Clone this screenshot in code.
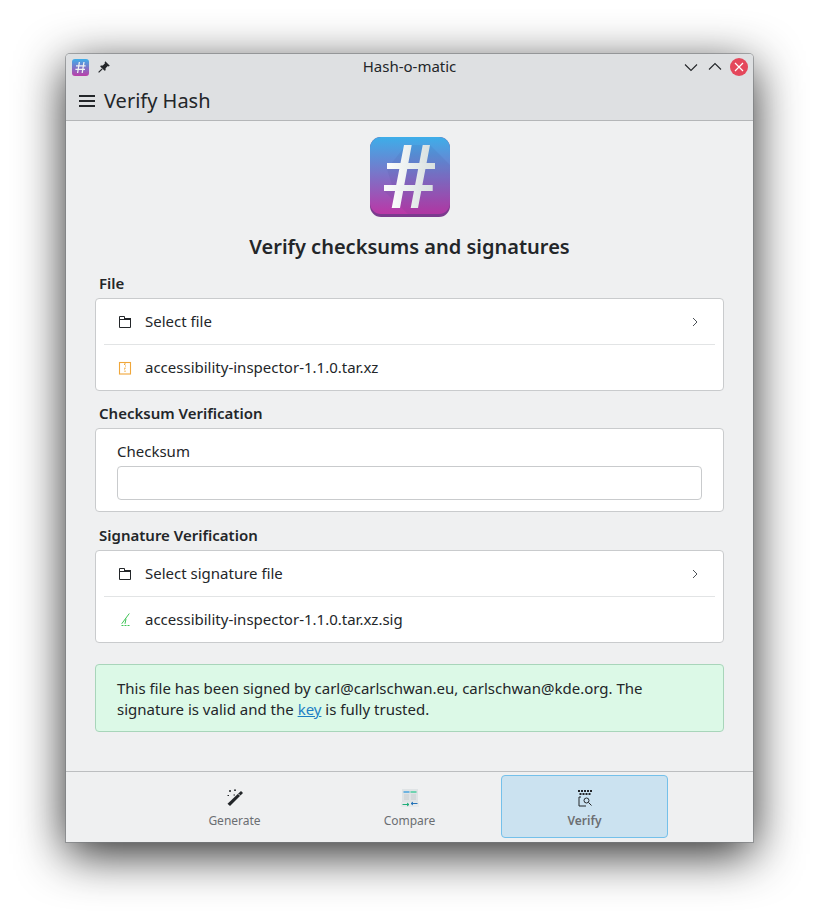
<div class="page">
  <div class="window">
    <div class="titlebar">
      <div class="tb-left">
        <svg viewBox="0 0 17 17" width="17" height="17">
          <defs>
            <linearGradient id="gs" x1="0" y1="0" x2="0" y2="1">
              <stop offset="0" stop-color="#3daee9" />
              <stop offset="1" stop-color="#bb3da8" />
            </linearGradient>
          </defs>
          <rect width="17" height="17" rx="3" fill="url(#gs)" />
          <path d="M7.4 3 L5.6 14 M12 3 L10.2 14 M4 6.8 H13.6 M3.4 10.4 H13" stroke="#eef2f2" stroke-width="1.3" fill="none" />
        </svg>
        <svg class="pin" viewBox="0 0 14 14" width="14" height="14">
          <path d="M8.3 1.2 L12.8 5.7 L11.6 6.4 L10.8 6 L8.6 8.2 L8.6 10.2 L7.6 10.8 L3.2 6.4 L3.8 5.4 L5.8 5.4 L8 3.2 L7.6 2.4 Z" fill="#232629" />
          <path d="M5.2 8.8 L1.6 12.4" stroke="#232629" stroke-width="1.2" />
        </svg>
      </div>
      <div class="tb-title">Hash-o-matic</div>
      <div class="tb-right">
        <svg class="down" viewBox="0 0 14 14" width="14" height="14"><path d="M1 4.5 L7 10.5 L13 4.5" fill="none" stroke="#232629" stroke-width="1.1" /></svg>
        <svg class="up" viewBox="0 0 14 14" width="14" height="14"><path d="M1 9.5 L7 3.5 L13 9.5" fill="none" stroke="#232629" stroke-width="1.1" /></svg>
        <svg viewBox="0 0 18 18" width="18" height="18">
          <circle cx="9" cy="9" r="9" fill="#e4475b" />
          <path d="M5 5 L13 13 M13 5 L5 13" stroke="#fff" stroke-width="1.2" fill="none" />
        </svg>
      </div>
    </div>

    <div class="header">
      <svg viewBox="0 0 16 12" width="16" height="12"><path d="M0 1 H16 M0 6 H16 M0 11 H16" stroke="#232629" stroke-width="2" fill="none" /></svg>
      <span class="page-title">Verify Hash</span>
    </div>

    <main class="content">
      <svg class="hero" viewBox="0 0 80 80" width="80" height="80">
        <defs>
          <linearGradient id="g" x1="0" y1="0" x2="0" y2="1">
            <stop offset="0" stop-color="#3daee9" />
            <stop offset="1" stop-color="#bb37a6" />
          </linearGradient>
          <linearGradient id="h" x1="0" y1="0" x2="1" y2="0">
            <stop offset="0" stop-color="#fbfcfc" />
            <stop offset="1" stop-color="#d8e0e0" />
          </linearGradient>
        </defs>
        <rect width="80" height="80" rx="11" fill="#7b3a8e" />
        <path d="M0 11 A11 11 0 0 1 11 0 H69 A11 11 0 0 1 80 11 V66 A11 11 0 0 1 69 77 H11 A11 11 0 0 1 0 66 Z" fill="url(#g)" />
        <path d="M60 8 L80 28 V66 A11 11 0 0 1 69 77 H38 L14 54 L22 48 L17 32 L36 8 Z" fill="#2c3170" opacity="0.07" />
        <path d="M34 8 H41.7 L30 71 H21.7 Z M52.7 8 H60 L48 71 H40.7 Z" fill="url(#h)" />
        <rect x="17" y="26" width="48" height="6" fill="url(#h)" />
        <rect x="14" y="48" width="48.7" height="6" fill="url(#h)" />
      </svg>

      <h1>Verify checksums and signatures</h1>

      <section class="group first">
        <h2>File</h2>
        <div class="card">
          <div class="row">
            <svg class="ri" viewBox="0 0 14 14" width="14" height="14">
              <path d="M1.5 1.5 H6.5 V3.5 H12.5 V12.5 H1.5 Z" fill="none" stroke="#232629" stroke-width="1" />
              <path d="M1 4 H13 V5 H1 Z M6 3 H13 V4 H6 Z" fill="#232629" />
            </svg>
            <span class="grow">Select file</span>
            <svg class="chev" viewBox="0 0 10 10" width="10" height="10"><path d="M3 1 L7 5 L3 9" fill="none" stroke="#4d5257" stroke-width="1" /></svg>
          </div>
          <div class="sep"></div>
          <div class="row">
            <svg class="ri" viewBox="0 0 14 14" width="14" height="14">
              <rect x="1.5" y="1.5" width="11" height="11.5" fill="none" stroke="#f0a73a" stroke-width="1.1" />
              <path d="M7 2 V3.5 M6 3.5 H7 M7 5 H8 M7 6.5 V8 M6 8 H7 M7 9.5 V11" stroke="#f0a73a" stroke-width="1" fill="none" />
            </svg>
            <span class="grow">accessibility-inspector-1.1.0.tar.xz</span>
          </div>
        </div>
      </section>

      <section class="group second">
        <h2>Checksum Verification</h2>
        <div class="card field">
          <label for="checksum">Checksum</label>
          <input id="checksum" type="text" />
        </div>
      </section>

      <section class="group">
        <h2>Signature Verification</h2>
        <div class="card">
          <div class="row">
            <svg class="ri" viewBox="0 0 14 14" width="14" height="14">
              <path d="M1.5 1.5 H6.5 V3.5 H12.5 V12.5 H1.5 Z" fill="none" stroke="#232629" stroke-width="1" />
              <path d="M1 4 H13 V5 H1 Z M6 3 H13 V4 H6 Z" fill="#232629" />
            </svg>
            <span class="grow">Select signature file</span>
            <svg class="chev" viewBox="0 0 10 10" width="10" height="10"><path d="M3 1 L7 5 L3 9" fill="none" stroke="#4d5257" stroke-width="1" /></svg>
          </div>
          <div class="sep"></div>
          <div class="row">
            <svg class="ri" viewBox="0 0 14 14" width="14" height="14">
              <path d="M11.3 0.5 L3.7 10.8 M8 5.8 L7 10.8" fill="none" stroke="#3fc456" stroke-width="1" />
              <path d="M3.5 12.5 H11.5" stroke="#3fc456" stroke-width="1" stroke-dasharray="2 1" />
            </svg>
            <span class="grow">accessibility-inspector-1.1.0.tar.xz.sig</span>
          </div>
        </div>
      </section>

      <div class="message">
        This file has been signed by carl@carlschwan.eu, carlschwan@kde.org. The signature is valid and the <a href="#key">key</a> is fully trusted.
      </div>
    </main>

    <footer class="footer">
      <div class="tab">
        <svg viewBox="0 0 18 18" width="18" height="18">
          <path d="M15 2 L17 4 L4 17 L1.5 14.8 Z" fill="#232629" />
          <path d="M12.3 4.8 L14.3 6.8" stroke="#eff0f1" stroke-width="1" />
          <path d="M4 1 V3 M3 2 H5 M9 0.5 V2 M8 1.2 H10 M1.5 6.5 H3 M7.5 6 H9" stroke="#232629" stroke-width="1" fill="none" />
        </svg>
        <span>Generate</span>
      </div>
      <div class="tab">
        <svg viewBox="0 0 18 18" width="18" height="18">
          <rect x="1" y="0" width="16" height="13" fill="#dfe3e5" />
          <rect x="2.5" y="2" width="6" height="2" fill="#6fb3e0" />
          <rect x="9.5" y="2" width="6" height="2" fill="#6fd3b0" />
          <path d="M3 6 H8 M10 6 H15 M3 8 H8 M10 8 H15 M3 10 H8 M10 10 H15" stroke="#c8cdd0" stroke-width="1" />
          <rect x="0" y="13" width="18" height="5" fill="#e6e9ea" />
          <path d="M1.5 15.5 H8 M6 14 L8 15.5 L6 17" stroke="#1fae7a" stroke-width="1" fill="none" />
          <path d="M16.5 14.5 H10 M12 13 L10 14.5 L12 16" stroke="#2573b8" stroke-width="1" fill="none" />
        </svg>
        <span>Compare</span>
      </div>
      <div class="tab active">
        <svg viewBox="0 0 18 18" width="18" height="18">
          <path d="M2 2 H17" stroke="#232629" stroke-width="2" stroke-dasharray="2 1" fill="none" />
          <path d="M3.5 5 H15.5" stroke="#232629" stroke-width="2" stroke-dasharray="2 1" fill="none" />
          <path d="M3 8 V17 H10 M3 8 H5" stroke="#232629" stroke-width="1" fill="none" />
          <circle cx="10.5" cy="11.5" r="2.5" fill="none" stroke="#232629" stroke-width="1" />
          <path d="M12.5 13.5 L15.5 16.5" stroke="#232629" stroke-width="1" />
        </svg>
        <span>Verify</span>
      </div>
    </footer>
  </div>
</div>

<style>
  :global(body) {
    margin: 0;
    background: #fff;
  }
  .page {
    width: 819px;
    height: 920px;
    box-sizing: border-box;
    padding: 54px 66px 78px;
    font-family: "Noto Sans", sans-serif;
    font-size: 15px;
    color: #232629;
    overflow: hidden;
  }
  .window {
    width: 687px;
    height: 788px;
    display: flex;
    flex-direction: column;
    border-radius: 4px 4px 0 0;
    box-shadow:
      0 0 0 1px rgba(120, 123, 126, 0.6),
      0 12px 48px rgba(0, 0, 0, 0.85);
    background: #eff0f1;
    overflow: hidden;
  }
  .titlebar {
    height: 26px;
    flex: none;
    background: #dee0e2;
    display: flex;
    align-items: center;
    justify-content: space-between;
    padding: 0 5px 0 6px;
    position: relative;
  }
  .tb-left {
    display: flex;
    align-items: center;
    gap: 8px;
  }
  .tb-title {
    position: absolute;
    left: 0;
    right: 0;
    top: 0;
    text-align: center;
    line-height: 24px;
  }
  .tb-right {
    display: flex;
    align-items: center;
  }
  .down {
    margin-right: 10px;
  }
  .up {
    margin-right: 8px;
  }
  .header {
    height: 41px;
    flex: none;
    box-sizing: border-box;
    background: #dee0e2;
    border-bottom: 1px solid #b4b6b8;
    display: flex;
    align-items: center;
    gap: 9px;
    padding: 1px 13px 0;
  }
  .page-title {
    font-size: 20px;
    line-height: 30px;
  }
  .content {
    flex: 1;
    display: flex;
    flex-direction: column;
    padding: 16px 29px 0;
  }
  .hero {
    align-self: center;
    flex: none;
  }
  h1 {
    margin: 15px 0 0;
    font-size: 20px;
    line-height: 30px;
    font-weight: 600;
    text-align: center;
  }
  .group {
    margin-top: 13px;
  }
  .group.first {
    margin-top: 11px;
  }
  .group.second {
    margin-top: 12px;
  }
  h2 {
    margin: 0 0 5px 4px;
    font-size: 15px;
    line-height: 20px;
    font-weight: 600;
  }
  .card {
    background: #fff;
    border: 1px solid #c9cbcd;
    border-radius: 4px;
    box-sizing: border-box;
  }
  .row {
    height: 45px;
    display: flex;
    align-items: center;
    padding: 0 23px 0 22px;
    gap: 13px;
  }
  .ri {
    flex: none;
  }
  .grow {
    flex: 1;
    padding-bottom: 2px;
  }
  .sep {
    height: 1px;
    background: #e2e4e5;
    margin: 0 8px;
  }
  .field {
    padding: 12px 21px;
    height: 84px;
    display: flex;
    flex-direction: column;
    gap: 5px;
  }
  label {
    line-height: 20px;
  }
  input {
    height: 34px;
    flex: none;
    box-sizing: border-box;
    border: 1px solid #c9cbcd;
    border-radius: 4px;
    background: #fff;
    outline: none;
  }
  .message {
    margin-top: 21px;
    background: #dcf9e7;
    border: 1px solid #a8d5ba;
    border-radius: 4px;
    padding: 13px 21px 0;
    line-height: 21px;
    height: 68px;
    box-sizing: border-box;
  }
  a {
    color: #1d7fc4;
    text-decoration: underline;
  }
  .footer {
    height: 71px;
    flex: none;
    border-top: 1px solid #bcbec0;
    box-sizing: border-box;
    display: flex;
    justify-content: center;
    gap: 8px;
    padding: 3px 0 4px;
  }
  .tab {
    width: 167px;
    box-sizing: border-box;
    display: flex;
    flex-direction: column;
    align-items: center;
    justify-content: center;
    gap: 6px;
    font-size: 12px;
    line-height: 16px;
    color: #6b6e72;
    border: 1px solid transparent;
    border-radius: 4px;
    padding-top: 5px;
  }
  .tab.active {
    background: #cbe2f0;
    border-color: #74c0ea;
    font-weight: 600;
  }
</style>
